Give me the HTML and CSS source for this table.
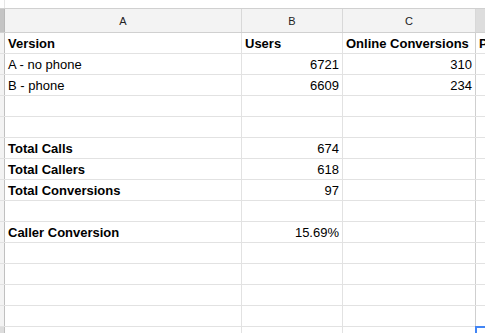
FILE: index.html
```html
<!DOCTYPE html>
<html>
<head>
<meta charset="utf-8">
<link rel="stylesheet" href="styles.css">
</head>
<body>
<div class="sheet">
  <div class="row top">
    <div class="c strip"></div>
    <div class="c ca"></div>
    <div class="c cb"></div>
    <div class="c cc"></div>
    <div class="c cd"></div>
  </div>
  <div class="row hdr">
    <div class="c strip corner"></div>
    <div class="c ca">A</div>
    <div class="c cb">B</div>
    <div class="c cc">C</div>
    <div class="c cd sel-col"></div>
  </div>
  <div class="row">
    <div class="c strip"></div>
    <div class="c ca b">Version</div>
    <div class="c cb b">Users</div>
    <div class="c cc b">Online Conversions</div>
    <div class="c cd b">Phone Conversions</div>
  </div>
  <div class="row">
    <div class="c strip"></div>
    <div class="c ca">A - no phone</div>
    <div class="c cb num">6721</div>
    <div class="c cc num">310</div>
    <div class="c cd"></div>
  </div>
  <div class="row">
    <div class="c strip"></div>
    <div class="c ca">B - phone</div>
    <div class="c cb num">6609</div>
    <div class="c cc num">234</div>
    <div class="c cd"></div>
  </div>
  <div class="row">
    <div class="c strip"></div><div class="c ca"></div><div class="c cb"></div><div class="c cc"></div><div class="c cd"></div>
  </div>
  <div class="row">
    <div class="c strip"></div><div class="c ca"></div><div class="c cb"></div><div class="c cc"></div><div class="c cd"></div>
  </div>
  <div class="row">
    <div class="c strip"></div>
    <div class="c ca b">Total Calls</div>
    <div class="c cb num">674</div>
    <div class="c cc"></div>
    <div class="c cd"></div>
  </div>
  <div class="row">
    <div class="c strip"></div>
    <div class="c ca b">Total Callers</div>
    <div class="c cb num">618</div>
    <div class="c cc"></div>
    <div class="c cd"></div>
  </div>
  <div class="row">
    <div class="c strip"></div>
    <div class="c ca b">Total Conversions</div>
    <div class="c cb num">97</div>
    <div class="c cc"></div>
    <div class="c cd"></div>
  </div>
  <div class="row">
    <div class="c strip"></div><div class="c ca"></div><div class="c cb"></div><div class="c cc"></div><div class="c cd"></div>
  </div>
  <div class="row">
    <div class="c strip"></div>
    <div class="c ca b">Caller Conversion</div>
    <div class="c cb num">15.69%</div>
    <div class="c cc"></div>
    <div class="c cd"></div>
  </div>
  <div class="row">
    <div class="c strip"></div><div class="c ca"></div><div class="c cb"></div><div class="c cc"></div><div class="c cd"></div>
  </div>
  <div class="row">
    <div class="c strip"></div><div class="c ca"></div><div class="c cb"></div><div class="c cc"></div><div class="c cd"></div>
  </div>
  <div class="row">
    <div class="c strip"></div><div class="c ca"></div><div class="c cb"></div><div class="c cc"></div><div class="c cd"></div>
  </div>
  <div class="row">
    <div class="c strip"></div><div class="c ca"></div><div class="c cb"></div><div class="c cc"></div><div class="c cd"></div>
  </div>
  <div class="row">
    <div class="c strip sel-row"></div><div class="c ca"></div><div class="c cb"></div><div class="c cc"></div>
    <div class="c cd active"><span class="selbox"></span></div>
  </div>
</div>
</body>
</html>
```

FILE: styles.css
```css
html, body {
  margin: 0;
  padding: 0;
  background: #ffffff;
  overflow: hidden;
}
.sheet {
  width: 485px;
  height: 333px;
  overflow: hidden;
  font-family: "Liberation Sans", Arial, sans-serif;
  font-size: 13px;
  color: #000;
}
.row {
  display: flex;
  height: 20px;
  border-bottom: 1px solid #e2e2e2;
}
.c {
  box-sizing: border-box;
  flex: none;
  border-right: 1px solid #e2e2e2;
  padding: 3px 3px 0;
  line-height: 15px;
  white-space: nowrap;
  overflow: hidden;
  position: relative;
}
.strip {
  width: 5px;
  padding: 0;
  background: #f3f3f3;
  border-right: 1px solid #c0c0c0;
}
.ca { width: 237px; }
.cb { width: 101px; }
.cc { width: 133px; border-right-color: #cfcfcf; }
.cd { width: 40px; border-right: none; overflow: visible; }
.b { font-weight: bold; }
.num { text-align: right; }

.top {
  height: 8px;
  border-bottom: 1px solid #d0d0d0;
}
.top .c { border-right-color: transparent; background: #fff; padding: 0; }
.top .strip { border-right-color: #e6e6e6; }

.hdr {
  height: 23px;
  border-bottom: 1px solid #d0d0d0;
  background: #f3f3f3;
}
.hdr .c {
  font-size: 11px;
  color: #222;
  text-align: center;
  line-height: 13px;
  padding-top: 6px;
  border-right-color: #d8d8d8;
}
.hdr .corner { background: #c4c4c4; border-right-color: #b8b8b8; }
.hdr .sel-col { background: #dddddd; }
.sel-row { background: #dddddd; }
.active { overflow: visible; }
.selbox {
  position: absolute;
  left: -1px;
  top: -1px;
  width: 30px;
  height: 30px;
  border-top: 2px solid #4285f4;
  border-left: 2px solid #4285f4;
}
```
